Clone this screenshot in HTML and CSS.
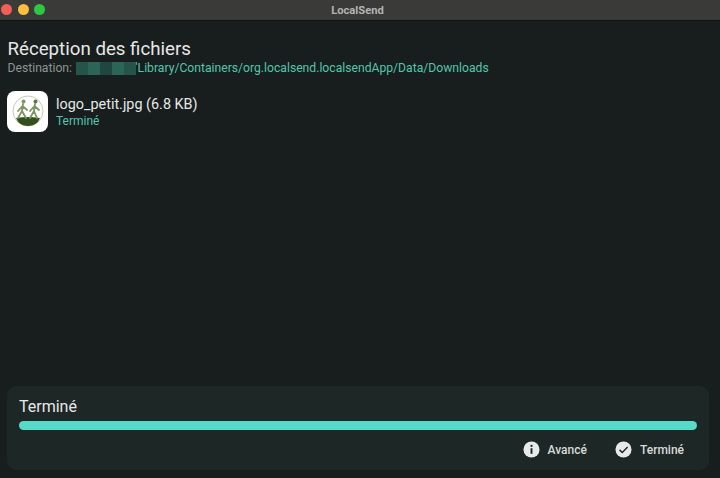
FILE: index.html
```html
<!DOCTYPE html>
<html lang="fr">
<head>
<meta charset="utf-8">
<title>LocalSend</title>
<link rel="stylesheet" href="styles.css">
</head>
<body>
<div class="window">
  <header class="titlebar">
    <div class="lights">
      <span class="light red"></span>
      <span class="light yellow"></span>
      <span class="light green"></span>
    </div>
    <span class="app-name">LocalSend</span>
  </header>
  <main class="content">
    <h1 class="heading">Réception des fichiers</h1>
    <p class="destination">
      <span class="dest-label">Destination:</span>
      <span class="redacted">
        <span class="cell c1"></span><span class="cell c2"></span><span class="cell c3"></span><span class="cell c4"></span><span class="cell c5"></span>
      </span><span class="path">'Library/Containers/org.localsend.localsendApp/Data/Downloads</span>
    </p>
    <section class="file">
      <div class="thumb">
        <svg width="38" height="38" viewBox="0 0 38 38">
          <circle cx="19" cy="18" r="15" fill="none" stroke="#c3ccb4" stroke-width="1"/>
          <path d="M7 25 Q19 23 31 25 Q28 33 19 33 Q10 33 7 25Z" fill="#34511d"/>
          <g fill="none" stroke="#7d9664" stroke-width="1.8" stroke-linecap="round" stroke-linejoin="round">
            <path d="M14 11 L13 18 L9 25 M13 18 L17 25 M13.5 13 L9 18 M13.5 13 L18 17"/>
            <path d="M26 11 L25 18 L21 25 M25 18 L28 25 M25.5 13 L21 18 M25.5 13 L30 17"/>
          </g>
          <circle cx="14.5" cy="8.5" r="2" fill="#7d9664"/>
          <circle cx="26.5" cy="8.5" r="2" fill="#5c7843"/>
        </svg>
      </div>
      <div class="file-info">
        <div class="file-name">logo_petit.jpg (6.8 KB)</div>
        <div class="file-status">Terminé</div>
      </div>
    </section>
  </main>
  <footer class="panel">
    <div class="panel-title">Terminé</div>
    <div class="progress"></div>
    <div class="actions">
      <button class="action">
        <svg class="action-icon" viewBox="0 0 18 18"><circle cx="9" cy="9" r="8.5" fill="#e8eaea"/><circle cx="9" cy="5.2" r="1.2" fill="#1d2726"/><rect x="8" y="7.6" width="2" height="6" fill="#1d2726"/></svg>
        <span>Avancé</span>
      </button>
      <button class="action">
        <svg class="action-icon" viewBox="0 0 18 18"><circle cx="9" cy="9" r="8.5" fill="#e8eaea"/><path d="M4.8 9.4 L7.7 12.2 L13.4 6.4" fill="none" stroke="#1d2726" stroke-width="1.5"/></svg>
        <span>Terminé</span>
      </button>
    </div>
  </footer>
</div>
</body>
</html>
```
FILE: styles.css
```css
* { box-sizing: border-box; }
html, body { margin: 0; height: 100%; }
body { background: #181e1d; font-family: Roboto, "Liberation Sans", sans-serif; color: #e6e8e8; overflow: hidden; }
.window { height: 478px; display: flex; flex-direction: column; }
.titlebar { position: relative; flex: none; height: 21px; padding-right: 5px; background: #3a3a39; border-bottom: 1px solid #111; display: flex; align-items: center; justify-content: center; }
.lights { position: absolute; left: 1px; top: 4px; display: flex; gap: 5.5px; }
.light { width: 11px; height: 11px; border-radius: 50%; }
.red { background: #f25f58; }
.yellow { background: #fbbe3e; }
.green { background: #2dc840; }
.app-name { font-size: 11.2px; font-weight: 700; color: #b4b4b3; }
.content { flex: 1; padding: 18px 8px 0 7.5px; }
.heading { margin: 0; font-size: 18.7px; font-weight: 400; line-height: 21px; color: #e6e8e8; }
.destination { margin: 0; display: flex; font-size: 12.17px; line-height: 16px; height: 16px; align-items: center; white-space: nowrap; }
.dest-label { color: #8d9392; margin-right: 4px; }
.path { color: #55c4ae; }
.redacted { display: flex; width: 59.5px; height: 13px; }
.cell { flex: 1; height: 100%; }
.c1 { background: #25544b; } .c2 { background: #2c6558; } .c3 { background: #1f4640; } .c4 { background: #2c6558; } .c5 { background: #25544b; }
.file { margin-top: 15px; display: flex; align-items: center; gap: 8px; margin-left: -0.5px; }
.thumb { width: 41px; height: 41px; border-radius: 8px; background: #fff; display: flex; align-items: center; justify-content: center; }
.file-info { padding-top: 2px; }
.file-name { font-size: 14.4px; line-height: 18px; color: #e6e8e8; }
.file-status { font-size: 12px; line-height: 15px; color: #55c4ae; }
.panel { flex: none; margin: 0 11px 8px 7px; height: 84px; background: #1d2726; border-radius: 9px; padding: 11px 12px 0; }
.panel-title { font-size: 16px; line-height: 20px; color: #e6e8e8; }
.progress { margin-top: 4px; height: 9px; border-radius: 5px; background: #55dbc8; }
.actions { display: flex; justify-content: flex-end; gap: 28px; margin-top: 11px; padding-right: 13px; }
.action { display: flex; align-items: center; gap: 8px; padding: 0; border: 0; background: none; color: #d8dada; font: 500 12px Roboto, sans-serif; }
.action-icon { width: 17px; height: 17px; display: block; }
```
